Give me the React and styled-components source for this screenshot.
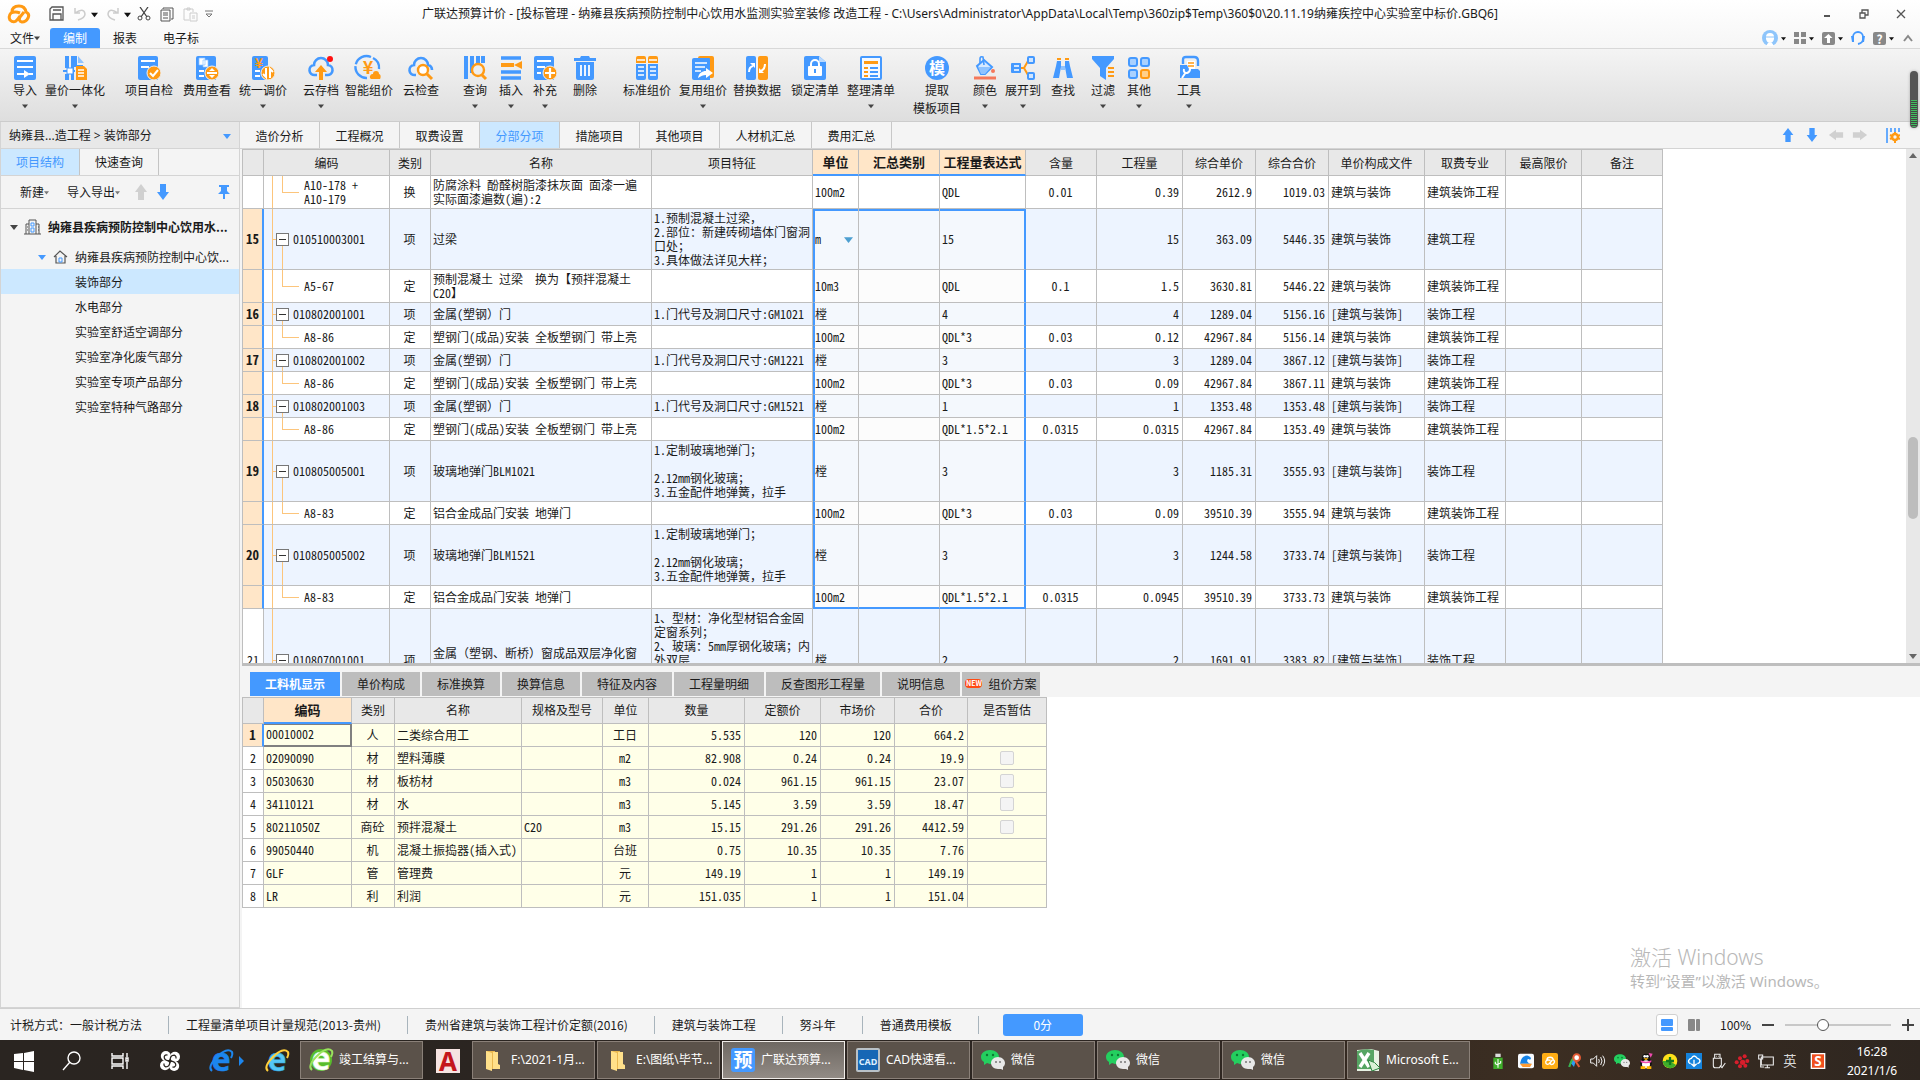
import React from "react";
import styled, { createGlobalStyle } from "styled-components";

const BLUE = "#4499ff";
const ORANGE = "#ff9a14";

const toolGroups = [
  [
    { label: "导入", icon: "import", width: 36, menu: true },
    { label: "量价一体化", icon: "merge", width: 64, menu: true },
  ],
  [
    { label: "项目自检", icon: "check", width: 60 },
    { label: "费用查看", icon: "fee", width: 56 },
    { label: "统一调价", icon: "adjust", width: 56, menu: true },
  ],
  [
    { label: "云存档", icon: "cloudUp", width: 36, menu: true },
    { label: "智能组价", icon: "smart", width: 60 },
    { label: "云检查", icon: "cloudFind", width: 44 },
  ],
  [
    { label: "查询", icon: "query", width: 40, menu: true },
    { label: "插入", icon: "insert", width: 32, menu: true },
    { label: "补充", icon: "append", width: 36, menu: true },
    { label: "删除", icon: "trash", width: 44 },
  ],
  [
    { label: "标准组价", icon: "standard", width: 56 },
    { label: "复用组价", icon: "reuse", width: 56, menu: true },
    { label: "替换数据", icon: "replace", width: 52 },
    { label: "锁定清单", icon: "lock", width: 64 },
    { label: "整理清单", icon: "tidy", width: 48, menu: true },
  ],
  [
    { label: "提取", second: "模板项目", icon: "template", width: 60 },
    { label: "颜色", icon: "color", width: 36, menu: true },
    { label: "展开到", icon: "expand", width: 40, menu: true },
    { label: "查找", icon: "find", width: 40 },
    { label: "过滤", icon: "filter", width: 40, menu: true },
    { label: "其他", icon: "other", width: 32, menu: true },
  ],
  [{ label: "工具", icon: "tools", width: 44, menu: true }],
];

const viewTabs = [
  "造价分析",
  "工程概况",
  "取费设置",
  "分部分项",
  "措施项目",
  "其他项目",
  "人材机汇总",
  "费用汇总",
];

const treeLeaves = [
  "装饰部分",
  "水电部分",
  "实验室舒适空调部分",
  "实验室净化废气部分",
  "实验室专项产品部分",
  "实验室特种气路部分",
];

const billColumns = [
  { key: "no", title: "", width: 21, align: "center" },
  { key: "code", title: "编码", width: 126, align: "left" },
  { key: "kind", title: "类别", width: 41, align: "center" },
  { key: "name", title: "名称", width: 221, align: "left" },
  { key: "feature", title: "项目特征", width: 161, align: "left" },
  { key: "unit", title: "单位", width: 46, align: "left", picked: true },
  { key: "sum", title: "汇总类别", width: 81, align: "left", picked: true },
  { key: "expr", title: "工程量表达式", width: 86, align: "left", picked: true },
  { key: "content", title: "含量", width: 71, align: "center" },
  { key: "qty", title: "工程量", width: 86, align: "right" },
  { key: "price", title: "综合单价", width: 73, align: "right" },
  { key: "total", title: "综合合价", width: 73, align: "right" },
  { key: "file", title: "单价构成文件", width: 96, align: "left" },
  { key: "major", title: "取费专业", width: 81, align: "left" },
  { key: "limit", title: "最高限价", width: 76, align: "left" },
  { key: "note", title: "备注", width: 81, align: "left" },
];

const doorName = "塑钢门(成品)安装 全板塑钢门 带上亮";
const glassFeature = "1.定制玻璃地弹门；\n\n2.12mm钢化玻璃；\n3.五金配件地弹簧，拉手";

const billRows = [
  { code: "A10-178 +\nA10-179", kind: "换", name: "防腐涂料 酚醛树脂漆抹灰面 面漆一遍\n实际面漆遍数(遍):2", unit: "100m2", expr: "QDL", content: "0.01", qty: "0.39", price: "2612.9", total: "1019.03", file: "建筑与装饰", major: "建筑装饰工程", height: 33 },
  { item: true, sel: true, no: "15", code: "010510003001", kind: "项", name: "过梁", feature: "1.预制混凝土过梁，\n2.部位：新建砖砌墙体门窗洞\n口处；\n3.具体做法详见大样；", unit: "m", dropdown: true, expr: "15", qty: "15", price: "363.09", total: "5446.35", file: "建筑与装饰", major: "建筑工程", height: 61 },
  { sel: true, code: "A5-67", kind: "定", name: "预制混凝土 过梁  换为【预拌混凝土\nC20】", unit: "10m3", expr: "QDL", content: "0.1", qty: "1.5", price: "3630.81", total: "5446.22", file: "建筑与装饰", major: "建筑装饰工程", height: 33 },
  { item: true, sel: true, no: "16", code: "010802001001", kind: "项", name: "金属(塑钢）门", feature: "1.门代号及洞口尺寸:GM1021", unit: "樘", expr: "4", qty: "4", price: "1289.04", total: "5156.16", file: "[建筑与装饰]", major: "装饰工程", height: 23 },
  { sel: true, code: "A8-86", kind: "定", name: doorName, unit: "100m2", expr: "QDL*3", content: "0.03", qty: "0.12", price: "42967.84", total: "5156.14", file: "建筑与装饰", major: "建筑装饰工程", height: 23 },
  { item: true, sel: true, no: "17", code: "010802001002", kind: "项", name: "金属(塑钢）门", feature: "1.门代号及洞口尺寸:GM1221", unit: "樘", expr: "3", qty: "3", price: "1289.04", total: "3867.12", file: "[建筑与装饰]", major: "装饰工程", height: 23 },
  { sel: true, code: "A8-86", kind: "定", name: doorName, unit: "100m2", expr: "QDL*3", content: "0.03", qty: "0.09", price: "42967.84", total: "3867.11", file: "建筑与装饰", major: "建筑装饰工程", height: 23 },
  { item: true, sel: true, no: "18", code: "010802001003", kind: "项", name: "金属(塑钢）门", feature: "1.门代号及洞口尺寸:GM1521", unit: "樘", expr: "1", qty: "1", price: "1353.48", total: "1353.48", file: "[建筑与装饰]", major: "装饰工程", height: 23 },
  { sel: true, code: "A8-86", kind: "定", name: doorName, unit: "100m2", expr: "QDL*1.5*2.1", content: "0.0315", qty: "0.0315", price: "42967.84", total: "1353.49", file: "建筑与装饰", major: "建筑装饰工程", height: 23 },
  { item: true, sel: true, no: "19", code: "010805005001", kind: "项", name: "玻璃地弹门BLM1021", feature: glassFeature, unit: "樘", expr: "3", qty: "3", price: "1185.31", total: "3555.93", file: "[建筑与装饰]", major: "装饰工程", height: 61 },
  { sel: true, code: "A8-83", kind: "定", name: "铝合金成品门安装 地弹门", unit: "100m2", expr: "QDL*3", content: "0.03", qty: "0.09", price: "39510.39", total: "3555.94", file: "建筑与装饰", major: "建筑装饰工程", height: 23 },
  { item: true, sel: true, no: "20", code: "010805005002", kind: "项", name: "玻璃地弹门BLM1521", feature: glassFeature, unit: "樘", expr: "3", qty: "3", price: "1244.58", total: "3733.74", file: "[建筑与装饰]", major: "装饰工程", height: 61 },
  { sel: true, code: "A8-83", kind: "定", name: "铝合金成品门安装 地弹门", unit: "100m2", expr: "QDL*1.5*2.1", content: "0.0315", qty: "0.0945", price: "39510.39", total: "3733.73", file: "建筑与装饰", major: "建筑装饰工程", height: 23 },
  { item: true, no: "21", code: "010807001001", kind: "项", name: "金属（塑钢、断桥）窗成品双层净化窗\n ", feature: "1、型材：净化型材铝合金固\n定窗系列；\n2、玻璃：5mm厚钢化玻璃；内\n外双层\n\n\n ", unit: "樘", expr: "2", qty: "2", price: "1691.91", total: "3383.82", file: "[建筑与装饰]", major: "装饰工程", height: 103 },
];

const detailTabs = [
  { label: "工料机显示", width: 90 },
  { label: "单价构成", width: 78 },
  { label: "标准换算", width: 78 },
  { label: "换算信息", width: 78 },
  { label: "特征及内容", width: 90 },
  { label: "工程量明细", width: 90 },
  { label: "反查图形工程量", width: 114 },
  { label: "说明信息", width: 78 },
  { label: "组价方案", width: 78, fresh: true },
];

const detailColumns = [
  { title: "", width: 21 },
  { title: "编码", width: 88, align: "left", picked: true },
  { title: "类别", width: 43, align: "center" },
  { title: "名称", width: 127, align: "left" },
  { title: "规格及型号", width: 81, align: "left" },
  { title: "单位", width: 46, align: "center" },
  { title: "数量", width: 96, align: "right" },
  { title: "定额价", width: 76, align: "right" },
  { title: "市场价", width: 74, align: "right" },
  { title: "合价", width: 73, align: "right" },
  { title: "是否暂估", width: 79, align: "center" },
];

const detailRows = [
  { cells: ["00010002", "人", "二类综合用工", "", "工日", "5.535", "120", "120", "664.2"] },
  { cells: ["02090090", "材", "塑料薄膜", "", "m2", "82.908", "0.24", "0.24", "19.9"], tick: true },
  { cells: ["05030630", "材", "板枋材", "", "m3", "0.024", "961.15", "961.15", "23.07"], tick: true },
  { cells: ["34110121", "材", "水", "", "m3", "5.145", "3.59", "3.59", "18.47"], tick: true },
  { cells: ["80211050Z", "商砼", "预拌混凝土", "C20", "m3", "15.15", "291.26", "291.26", "4412.59"], tick: true },
  { cells: ["99050440", "机", "混凝土振捣器(插入式)", "", "台班", "0.75", "10.35", "10.35", "7.76"] },
  { cells: ["GLF", "管", "管理费", "", "元", "149.19", "1", "1", "149.19"] },
  { cells: ["LR", "利", "利润", "", "元", "151.035", "1", "1", "151.04"] },
];

const statusItems = [
  "计税方式：一般计税方法",
  "工程量清单项目计量规范(2013-贵州)",
  "贵州省建筑与装饰工程计价定额(2016)",
  "建筑与装饰工程",
  "努斗年",
  "普通费用模板",
];

const openWindows = [
  { label: "F:\\2021-1月...", icon: "folder" },
  { label: "E:\\图纸\\毕节...", icon: "folder" },
  { label: "广联达预算...", icon: "budget", active: true },
  { label: "CAD快速看...", icon: "cad" },
  { label: "微信", icon: "wechat" },
  { label: "微信", icon: "wechat" },
  { label: "微信", icon: "wechat" },
  { label: "Microsoft E...", icon: "excel" },
];

const trayIcons = [
  "usb", "bird", "cloud", "antenna", "volume", "wechat", "penguin",
  "plus", "sync", "eject", "paw", "network", "lang", "sogou",
];

const Doc = () => <path d="M3 0h16a2 2 0 0 1 2 2v22H3a2 2 0 0 1-2-2V2a2 2 0 0 1 2-2z" fill={BLUE} />;
const Badge = ({ children }) => (
  <>
    <circle cx="17" cy="17" r="7" fill={ORANGE} stroke="#efefef" />
    {children}
  </>
);

const toolArt = {
  import: (
    <>
      <rect x="1" width="22" height="24" rx="2" fill={BLUE} />
      <path d="M4 5h16M4 11h16M4 18h7M16 18h4" stroke="#fff" strokeWidth="2" />
      <path d="M11 14l6 4-6 4z" fill="#fff" />
    </>
  ),
  merge: (
    <>
      <path d="M2 0h4v12H2zM2 18h4v6H2zM8 0h6v9h6v2h-9v13H8v-6H7v-6h1z" fill={BLUE} />
      <path d="M15 0l6 7h-6z" fill="#8fc3ff" />
      <path d="M0 15h12" stroke={BLUE} strokeWidth="2" />
      <rect x="4" y="12" width="6" height="6" fill="#fff" stroke={BLUE} strokeWidth="1" />
      <path d="M13 10h8l3 3v11H13z" fill={ORANGE} />
      <path d="M15 14h6M15 17h6M15 20h6" stroke="#fff" strokeWidth="1.4" />
    </>
  ),
  check: (
    <>
      <Doc />
      <path d="M4 5h14M4 11h8" stroke="#fff" strokeWidth="2" />
      <Badge><path d="M13 17l3 3 5-6" fill="none" stroke="#fff" strokeWidth="2" /></Badge>
    </>
  ),
  fee: (
    <>
      <Doc />
      <path d="M4 2h6v7H4zM8 4h5v7H8z" fill="#fff" stroke="#8fc3ff" strokeWidth=".7" />
      <path d="M4 15h5M4 20h5" stroke="#fff" strokeWidth="2" />
      <Badge><path d="M12 17h10" stroke="#fff" strokeWidth="2" /><path d="M14 15l3-3 3 3zM14 19l3 3 3-3z" fill="#fff" /></Badge>
    </>
  ),
  adjust: (
    <>
      <rect x="1" width="16" height="24" rx="2" fill={BLUE} />
      <text x="8" y="12" textAnchor="middle" fontSize="14" fontWeight="700" fill={ORANGE}>¥</text>
      <path d="M4 15h5M4 20h5" stroke="#fff" strokeWidth="2" />
      <Badge><path d="M15 12v9l-3-3M19 22v-9l3 3" fill="none" stroke="#fff" strokeWidth="2" /></Badge>
    </>
  ),
  cloudUp: (
    <>
      <path d="M8 19H6a5 5 0 0 1-1-10 7 7 0 0 1 14 0 5 5 0 0 1-1 10h-2" fill="none" stroke={BLUE} strokeWidth="2.6" />
      <path d="M12 9l6 7h-4v8h-4v-8H6z" fill={ORANGE} />
      <circle cx="21" cy="3" r="3" fill="#ff1010" />
    </>
  ),
  smart: (
    <>
      <path d="M14 1a11 11 0 1 0-4 21M16 2a11 11 0 0 1 6 11" fill="none" stroke={BLUE} strokeWidth="2.4" strokeDasharray="19 2" />
      <text x="11" y="18" textAnchor="middle" fontSize="18" fontWeight="700" fill={ORANGE}>¥</text>
      <path d="M13 22a3 3 0 0 1 3-4 3 3 0 0 1 6 0c2 0 2 4 1 5H14z" fill={ORANGE} />
    </>
  ),
  cloudFind: (
    <>
      <path d="M7 19H6A5 5 0 0 1 5 9a7 7 0 0 1 14 0q4 1 4 5" fill="none" stroke={BLUE} strokeWidth="2.6" />
      <circle cx="14" cy="14" r="5" fill="#fff" stroke={ORANGE} strokeWidth="2.4" />
      <path d="M18 18l5 5" stroke={ORANGE} strokeWidth="3" />
    </>
  ),
  query: (
    <>
      <path d="M3 0v23M9 0v17M15 0v7M20 0v7" stroke={BLUE} strokeWidth="4" />
      <circle cx="15" cy="14" r="6" fill="#eee" stroke={ORANGE} strokeWidth="2.4" />
      <path d="M19 19l4 4" stroke={ORANGE} strokeWidth="3" />
    </>
  ),
  insert: (
    <>
      <path d="M2 2h20M2 16h20M2 22h20" stroke={BLUE} strokeWidth="3.6" />
      <path d="M2 9h13" stroke={ORANGE} strokeWidth="4" />
      <path d="M23 5v8l-8-4z" fill={ORANGE} />
    </>
  ),
  append: (
    <>
      <Doc />
      <path d="M4 5h14M4 11h8M4 17h4" stroke="#fff" strokeWidth="2" />
      <Badge><path d="M12 17h10M17 12v10" stroke="#fff" strokeWidth="2.2" /></Badge>
    </>
  ),
  trash: (
    <>
      <path d="M1 2h6l1-2h8l1 2h6v3H1zM3 6h18v16a2 2 0 0 1-2 2H5a2 2 0 0 1-2-2z" fill={BLUE} />
      <path d="M8 9v11M12 9v11M16 9v11" stroke="#fff" strokeWidth="1.8" />
    </>
  ),
  standard: (
    <>
      <path d="M1 7V2a2 2 0 0 1 2-2h6a2 2 0 0 1 2 2v5zM13 7V2a2 2 0 0 1 2-2h6a2 2 0 0 1 2 2v5z" fill={ORANGE} />
      <path d="M1 8h10v14a2 2 0 0 1-2 2H3a2 2 0 0 1-2-2zM13 8h10v14a2 2 0 0 1-2 2h-6a2 2 0 0 1-2-2z" fill={BLUE} />
      <path d="M2 4h8M14 4h8M3 11h6M3 15h6M3 19h6M15 11h6M15 15h6M15 19h6" stroke="#fff" strokeWidth="1.5" />
    </>
  ),
  reuse: (
    <>
      <rect x="7" width="16" height="22" rx="2" fill={ORANGE} />
      <path d="M3 2h15a1 1 0 0 1 1 1v21H3a2 2 0 0 1-2-2V4a2 2 0 0 1 2-2z" fill={BLUE} />
      <path d="M4 7h12M4 11h10M4 15h6" stroke="#fff" strokeWidth="1.7" />
      <path d="M7 22c1-5 4-7 8-7v-3l7 5-7 5v-3c-3 0-5 1-8 3z" fill="#fff" />
    </>
  ),
  replace: (
    <>
      <rect x="1" width="10" height="24" rx="2" fill={BLUE} />
      <rect x="13" width="10" height="24" rx="2" fill={ORANGE} />
      <path d="M4 16q0-5 4-6M20 8q0 5-4 7" fill="none" stroke="#fff" strokeWidth="2" />
      <path d="M5 7h5v5zM14 12v5h5z" fill="#fff" />
    </>
  ),
  lock: (
    <>
      <path d="M3 0h13l7 6v16a2 2 0 0 1-2 2H3a2 2 0 0 1-2-2V2a2 2 0 0 1 2-2z" fill={BLUE} />
      <path d="M16 0l7 6h-7z" fill="#b8d9ff" />
      <rect x="5" y="10" width="14" height="10" rx="1" fill="#fff" />
      <path d="M8 10V8a4 4 0 0 1 8 0v2" fill="none" stroke="#fff" strokeWidth="2" />
      <path d="M12 13v4" stroke={BLUE} strokeWidth="2" />
    </>
  ),
  tidy: (
    <>
      <rect x="2" y="1" width="20" height="22" rx="1" fill="#f5f9ff" stroke={BLUE} strokeWidth="2" />
      <path d="M5 5h14v3H5z" fill={ORANGE} />
      <path d="M5 12h4M5 16h4M5 20h4" stroke={ORANGE} strokeWidth="1.8" />
      <path d="M11 12h8M11 16h8M11 20h8" stroke={BLUE} strokeWidth="1.8" />
    </>
  ),
  template: (
    <>
      <circle cx="12" cy="12" r="12" fill={BLUE} />
      <text x="12" y="18" textAnchor="middle" fontSize="16" fontWeight="700" fill="#fff">模</text>
    </>
  ),
  color: (
    <>
      <path d="M4 10l7-6 8 7-7 7H8z" fill="#d6e9ff" stroke={BLUE} strokeWidth="2" />
      <path d="M5 11h13l-6 7H8z" fill="#8fc3ff" />
      <path d="M7 7V3q0-3 3-2l1 8" fill="none" stroke={BLUE} strokeWidth="1.6" />
      <circle cx="20" cy="15" r="2" fill="#f5785a" />
      <path d="M1 22h22" stroke="#f5785a" strokeWidth="3" />
    </>
  ),
  expand: (
    <>
      <path d="M9 12h4M13 12l4-7M13 12l4 7" stroke={ORANGE} strokeWidth="2" />
      <rect y="7" width="10" height="10" rx="1" fill={BLUE} />
      <path d="M3 10h5M3 14h5" stroke="#fff" strokeWidth="1.6" />
      <rect x="17" y="1" width="6" height="6" rx="1" fill="#cfe5ff" stroke={BLUE} strokeWidth="2" />
      <rect x="17" y="17" width="6" height="6" rx="1" fill="#cfe5ff" stroke={BLUE} strokeWidth="2" />
    </>
  ),
  find: (
    <>
      <path d="M6 2h4v2H6zM14 2h4v2h-4z" fill={ORANGE} />
      <path d="M6 5h4v6l-2 11H2l3-12zM18 5h-4v6l2 11h6l-3-12z" fill={BLUE} />
      <path d="M10 10h4v4h-4z" fill="#8fc3ff" />
    </>
  ),
  filter: (
    <>
      <path d="M1 0h22v3l-8 9v12l-6-4v-8L1 3z" fill={BLUE} />
      <path d="M17 12h6M17 16h6M17 20h6" stroke={ORANGE} strokeWidth="2" />
    </>
  ),
  other: (
    <>
      {[[2, 2], [14, 2], [2, 14]].map(([x, y]) => (
        <rect key={`${x}-${y}`} x={x} y={y} width="8" height="8" rx="2" fill="#a9d1ff" stroke={BLUE} strokeWidth="2" />
      ))}
      <rect x="14" y="14" width="8" height="8" rx="2" fill="#ffd08a" stroke={ORANGE} strokeWidth="2" />
    </>
  ),
  tools: (
    <>
      <path d="M6 8V4q0-3 3-3h8q4 0 4 4v5" fill="none" stroke={BLUE} strokeWidth="2.4" />
      <path d="M10 5h8v8h-8z" fill="#fff" />
      <path d="M11 7h6M11 10h6" stroke={ORANGE} strokeWidth="1.6" />
      <path d="M3 9h7l2 4h9l2 2v7H3z" fill={BLUE} />
      <path d="M5 22l4-6M7 13q-1 4 3 4 3-1 3-4" fill="none" stroke="#fff" strokeWidth="2" />
    </>
  ),
};

const WeChatArt = () => (
  <>
    <path d="M9 2c5 0 9 3 9 7s-4 7-9 7l-3-1-3 2v-3C1 13 0 11 0 9c0-4 4-7 9-7z" fill="#24cf5f" />
    <circle cx="6" cy="7" r="1.2" fill="#0d7a34" />
    <circle cx="12" cy="7" r="1.2" fill="#0d7a34" />
    <path d="M17 9c4 0 7 3 7 6 0 2-1 3-2 4v3l-2-1h-3c-4 0-7-3-7-6s3-6 7-6z" fill="#e8e8e8" />
    <circle cx="15" cy="14" r="1" fill="#777" />
    <circle cx="19" cy="14" r="1" fill="#777" />
  </>
);

const CloudMark = ({ color }) => (
  <path
    d="M5 8Q5 2 12 2q6 0 7 6 4 2 2 6-2 4-6 4-4-1-2-5l4-5M13 9Q8 7 4 9q-3 3-1 7 3 3 6 1 2-2 4-5"
    fill="none"
    stroke={color}
    strokeWidth="3"
  />
);

const BrowserArt = ({ light, dark, ring }) => (
  <>
    <text x="12" y="22" textAnchor="middle" fontSize="32" fontWeight="700" fill={light} stroke={dark} strokeWidth=".6">e</text>
    <path d="M3 22Q-2 18 8 8T23 3q1 2-1 6" fill="none" stroke={ring} strokeWidth="2" />
  </>
);

const taskArt = {
  windows: <path d="M2 5l9-1v8H2zM12 4l10-2v10H12zM2 13h9v8l-9-2zM12 13h10v10l-10-2z" fill="#fff" />,
  search: <><circle cx="14" cy="9" r="6" fill="none" stroke="#fff" strokeWidth="1.4" /><path d="M10 13l-7 8" stroke="#fff" strokeWidth="1.4" /></>,
  taskview: <path d="M4 4v3h11V4M4 20v-3h11v3M4 9h11v6H4zM19 4v4M19 13v7M18 9h2v3h-2z" fill="none" stroke="#fff" strokeWidth="1.4" />,
  pinwheel: (
    <>
      <g fill="#fff">
        <circle cx="7" cy="6" r="6" />
        <circle cx="18" cy="7" r="6" />
        <circle cx="6" cy="17" r="6" />
        <circle cx="17" cy="18" r="6" />
      </g>
      {[0, 90, 180, 270].map((turn) => (
        <path key={turn} d="M12 12Q5 12 5 7q1-3 4-2" fill="none" stroke="#2a2521" strokeWidth="1.5" transform={`rotate(${turn} 12 12)`} />
      ))}
    </>
  ),
  edge: <BrowserArt light="#1c86ee" dark="#1c86ee" ring="#1c86ee" />,
  ie: <BrowserArt light="#55c6f5" dark="#2aa4dd" ring="#ffcf3a" />,
  green: <><circle cx="12" cy="12" r="11" fill="#58bd2c" /><BrowserArt light="#fff" dark="#d8f5c8" ring="#9be35e" /></>,
  autocad: <><rect width="24" height="24" fill="#f6e4e2" /><text x="12" y="22" textAnchor="middle" fontSize="26" fontWeight="700" fill="#c4161c">A</text></>,
  folder: <><path d="M5 3h9v18H5z" fill="#e9b850" /><path d="M5 3l6 2v18l-6-2zM12 4h5v12l2 1v4h-7z" fill="#ffe08a" /></>,
  budget: <><rect width="24" height="24" rx="3" fill={BLUE} /><text x="12" y="19" textAnchor="middle" fontSize="19" fontWeight="700" fill="#fff">预</text></>,
  cad: <><rect width="24" height="24" rx="2" fill="#b9c1c7" /><rect x="2" y="2" width="20" height="20" fill="#1767b5" /><text x="12" y="17" textAnchor="middle" fontSize="9" fontWeight="700" fill="#dff0ff">CAD</text></>,
  wechat: <WeChatArt />,
  excel: (
    <>
      <path d="M1 2l14-1 8 2v20H1z" fill="#e8f3e4" />
      <path d="M1 3q8-3 17-1v19H1z" fill="#56a563" />
      <path d="M4 5l9 14M13 5L4 19" stroke="#fff" strokeWidth="3.4" />
      <path d="M12 12q7 1 12 8l-8 3z" fill="#d9f0d5" stroke="#2c8441" />
    </>
  ),
  usb: <><path d="M8 1h8v5H8z" fill="#ddd" /><path d="M5 7h14v17H5z" fill="#3fae2a" /><path d="M12 9v13M8 13v3l4 2M16 12v3l-4 2" fill="none" stroke="#fff" strokeWidth="1.6" /></>,
  bird: <><rect y="1" width="24" height="22" rx="3" fill="#f8fbff" /><path d="M3 16q2-13 12-12 7 3 3 6-5-3-4 3 2 3 6 3z" fill="#1583e8" /><path d="M3 16h18l-3 5H7z" fill="#ff9b32" /></>,
  cloud: <><rect width="24" height="24" rx="3" fill="#ffad14" /><g transform="translate(4 5) scale(.68)"><CloudMark color="#fff" /></g></>,
  antenna: <><path d="M3 21L13 4l4 1-5 16-4-5z" fill="#2d9bf0" /><path d="M5 21q3-12 9-16" stroke="#3bb54a" strokeWidth="3" fill="none" /><circle cx="16" cy="7" r="5" fill="#fff" stroke="#e45b34" strokeWidth="3" /><path d="M14 12l6 9" stroke="#e45b34" strokeWidth="3" /></>,
  volume: <path d="M1 9h4l5-5v16l-5-5H1zM13 9q2 3 0 6M16 6q4 6 0 12M19 4q6 8 0 16" fill="none" stroke="#eee" strokeWidth="1.5" />,
  penguin: (
    <>
      <ellipse cx="12" cy="15" rx="9" ry="8" fill="#111" />
      <circle cx="12" cy="7" r="6" fill="#111" />
      <ellipse cx="12" cy="17" rx="6" ry="6" fill="#fff" />
      <path d="M8 8h8l-4 3zM4 20h7v4H4zM13 20h7v4h-7z" fill="#ffb400" />
      <circle cx="10" cy="5" r="2" fill="#fff" />
      <circle cx="14" cy="5" r="2" fill="#fff" />
      <path d="M4 11q8 4 16 0v3q-8 3-16 0zM16 0l6 1-3 6z" fill="#f04bb0" />
    </>
  ),
  plus: <><circle cx="12" cy="12" r="11" fill="#ffe11a" /><path d="M1 12a11 11 0 0 0 20 6L12 12z" fill="#3fae2a" /><path d="M12 6v12M6 12h12" stroke="#147a1e" strokeWidth="3.4" /></>,
  sync: <><rect width="24" height="24" fill="#1583dc" /><path d="M7 16q-4-1-3-5 2-3 4-3 4-7 9 0 4 1 4 4 0 3-4 4M12 10v10M8 16l4 4 4-4" fill="none" stroke="#fff" strokeWidth="2" /></>,
  eject: <path d="M7 2h8v6H7zM5 8h12v10l-3 4H8q-3 0-3-3zM9 5h1M12 5h1M15 19l3 3 5-7" fill="none" stroke="#eee" strokeWidth="1.6" />,
  paw: <g fill="#d81e2c"><circle cx="4" cy="14" r="3" /><circle cx="9" cy="8" r="3" /><circle cx="16" cy="5" r="3" /><circle cx="20" cy="12" r="3" /><circle cx="13" cy="14" r="4" /><circle cx="9" cy="20" r="3" /><circle cx="17" cy="19" r="3" /></g>,
  network: <path d="M5 6h18v12H5zM1 3h6v6H1zM4 9v12h5M14 18v4M10 22h8" fill="none" stroke="#eee" strokeWidth="1.6" />,
  lang: <text x="12" y="19" textAnchor="middle" fontSize="20" fill="#d8d8d8">英</text>,
  sogou: <><rect x="1" width="22" height="24" fill="#fff" /><rect x="3" y="2" width="18" height="20" fill="#f0501e" /><text x="12" y="20" textAnchor="middle" fontSize="20" fontWeight="700" fill="#fff">S</text></>,
};

const Art = ({ set, name, size = 24 }) => (
  <svg width={size} height={size} viewBox="0 0 24 24" overflow="visible" aria-hidden="true">
    {set[name]}
  </svg>
);

const Caret = ({ color = "#444", size = 7 }) => (
  <svg width={size} height={size} viewBox="0 0 8 8" aria-hidden="true">
    <path d="M0 2h8L4 7z" fill={color} />
  </svg>
);

const ArrowArt = ({ color, turn = 0, size = 18 }) => (
  <svg width={size} height={size} viewBox="0 0 18 18" aria-hidden="true">
    <path d="M9 1l6 8h-3v8H6V9H3z" fill={color} transform={`rotate(${turn} 9 9)`} />
  </svg>
);

function TitleBar() {
  return (
    <TopRow>
      <QuickBar>
        <svg width="24" height="20" viewBox="0 0 24 20"><CloudMark color={ORANGE} /></svg>
        <QuickButton aria-label="保存" $left={18}>
          <svg width="16" height="16" viewBox="0 0 16 16"><path d="M1 14V3l2-2h11v13zM4 14V8h8v6M4 4h8" fill="none" stroke="#555" strokeWidth="1.3" /></svg>
        </QuickButton>
        <QuickButton aria-label="撤销" $left={8}>
          <svg width="14" height="16" viewBox="0 0 14 16"><path d="M2 2v5h5M2 7q9-6 10 1 0 4-7 6" fill="none" stroke="#ccc" strokeWidth="1.5" /></svg>
          <Caret color="#111" />
        </QuickButton>
        <QuickButton aria-label="恢复" $left={8}>
          <svg width="14" height="16" viewBox="0 0 14 16"><path d="M12 2v5H7M12 7Q3 1 2 8q0 4 7 6" fill="none" stroke="#ccc" strokeWidth="1.5" /></svg>
          <Caret color="#111" />
        </QuickButton>
        <QuickButton aria-label="剪切" $left={6}>
          <svg width="14" height="14" viewBox="0 0 14 14"><path d="M3 0l7 10M11 0L4 10" stroke="#444" strokeWidth="1.3" /><circle cx="3" cy="11" r="2" fill="none" stroke="#444" /><circle cx="11" cy="11" r="2" fill="none" stroke="#444" /></svg>
        </QuickButton>
        <QuickButton aria-label="复制" $left={9}>
          <svg width="14" height="15" viewBox="0 0 14 15"><path d="M3 2V1h10v11h-2M1 3h9v11H1zM3 6h5M3 8h5M3 11h5" fill="none" stroke="#555" /></svg>
        </QuickButton>
        <QuickButton aria-label="粘贴" $left={9}>
          <svg width="15" height="15" viewBox="0 0 15 15"><path d="M6 13H1V2h9v3M4 1h3v2H4zM7 6h7v8H7zM9 9h3M9 11h3" fill="none" stroke="#ccc" /></svg>
        </QuickButton>
        <QuickButton aria-label="自定义" $left={7}>
          <svg width="8" height="9" viewBox="0 0 8 9"><path d="M0 1h8" stroke="#777" /><path d="M1 4h6L4 7z" fill="none" stroke="#777" /></svg>
        </QuickButton>
      </QuickBar>
      <WindowTitle>
        广联达预算计价 - [投标管理 - 纳雍县疾病预防控制中心饮用水监测实验室装修 改造工程 - C:\Users\Administrator\AppData\Local\Temp\360zip$Temp\360$0\20.11.19纳雍疾控中心实验室中标价.GBQ6]
      </WindowTitle>
      <WindowButtons>
        <button aria-label="最小化"><svg width="10" height="10" viewBox="0 0 10 10"><path d="M2 7h6" stroke="#555" strokeWidth="2" /></svg></button>
        <button aria-label="还原"><svg width="10" height="10" viewBox="0 0 10 10"><path d="M1 4h5v5H1zM3 4V1h6v5H6" fill="none" stroke="#555" strokeWidth="1.3" /></svg></button>
        <button aria-label="关闭"><svg width="10" height="10" viewBox="0 0 10 10"><path d="M1 1l8 8M9 1L1 9" stroke="#555" strokeWidth="1.3" /></svg></button>
      </WindowButtons>
    </TopRow>
  );
}

function MenuBar() {
  return (
    <MenuRow>
      <MenuTab>文件<Caret size={6} /></MenuTab>
      <MenuTab $active>编制</MenuTab>
      <MenuTab>报表</MenuTab>
      <MenuTab $wide>电子标</MenuTab>
      <AccountBar>
        <button aria-label="账户">
          <svg width="16" height="16" viewBox="0 0 16 16"><circle cx="8" cy="8" r="8" fill="#8ec5fb" /><path d="M4 7a4 4 0 0 1 8 0v2q-1 4-4 4T4 9zM4 16l2-3h4l2 3z" fill="#fff" /><path d="M3 7h10" stroke="#8ec5fb" /></svg>
          <Caret color="#111" size={5} />
        </button>
        <button aria-label="布局">
          <svg width="12" height="12" viewBox="0 0 12 12"><path d="M0 0h5v5H0zM7 0h5v5H7zM0 7h5v5H0zM7 7h5v5H7z" fill="#888" /></svg>
          <Caret color="#111" size={5} />
        </button>
        <button aria-label="升级">
          <svg width="13" height="13" viewBox="0 0 13 13"><rect width="13" height="13" rx="2" fill="#888" /><path d="M6.500 2l4 4H8v5H5V6H2z" fill="#fff" /></svg>
          <Caret color="#111" size={5} />
        </button>
        <button aria-label="客服">
          <svg width="14" height="14" viewBox="0 0 14 14"><path d="M2 8V6a5 5 0 0 1 10 0v2q0 4-5 5" fill="none" stroke={BLUE} strokeWidth="1.8" /><path d="M0 5h3v6H1zM11 5h3l-1 6h-2z" fill={BLUE} /></svg>
        </button>
        <button aria-label="帮助">
          <HelpMark>?</HelpMark>
          <Caret color="#111" size={5} />
        </button>
        <button aria-label="收起功能区">
          <svg width="12" height="8" viewBox="0 0 12 8"><path d="M2 7l4-5 4 5" fill="none" stroke="#888" strokeWidth="2" /></svg>
        </button>
      </AccountBar>
    </MenuRow>
  );
}

function Ribbon() {
  return (
    <RibbonBar>
      {toolGroups.map((group) => (
        <ToolGroup key={group[0].label}>
          {group.map((tool) => (
            <ToolButton key={tool.label} $width={tool.width}>
              <Art set={toolArt} name={tool.icon} />
              <span>{tool.label}</span>
              {tool.second && <span>{tool.second}</span>}
              {tool.menu && <Caret size={6} />}
            </ToolButton>
          ))}
        </ToolGroup>
      ))}
    </RibbonBar>
  );
}

function ProjectPanel() {
  return (
    <SidePanel>
      <Breadcrumb>
        纳雍县...造工程 &gt; 装饰部分
        <Caret color={BLUE} size={8} />
      </Breadcrumb>
      <SideTabs>
        <SideTab $active>项目结构</SideTab>
        <SideTab>快速查询</SideTab>
      </SideTabs>
      <SideTools>
        <SideButton>新建<Caret color="#777" size={5} /></SideButton>
        <SideButton $left={18}>导入导出<Caret color="#777" size={5} /></SideButton>
        <SideButton $left={12} aria-label="上移"><ArrowArt color="#d0d0d0" /></SideButton>
        <SideButton $left={4} aria-label="下移"><ArrowArt color={BLUE} turn={180} /></SideButton>
        <PinButton aria-label="固定">
          <svg width="14" height="16" viewBox="0 0 14 16"><path d="M2 1h10v2h-2v4l3 3H1l3-3V3H2zM6 10h2v5H6z" fill={BLUE} /></svg>
        </PinButton>
      </SideTools>
      <RootNode>
        <Caret size={8} />
        <svg width="18" height="16" viewBox="0 0 18 16"><path d="M2 15V5h3M5 15V1h7v14M12 5h3v10M0 15h17M3 8h1M3 11h1M14 8h1M14 11h1" fill="none" stroke="#555" /><path d="M7 4h3v3H7zM7 9h3v4H7z" fill="none" stroke={BLUE} /></svg>
        <span>纳雍县疾病预防控制中心饮用水...</span>
      </RootNode>
      <BranchNode>
        <Caret color={BLUE} size={8} />
        <svg width="15" height="14" viewBox="0 0 15 14"><path d="M1 7l6-6 7 6M3 6v7h9V6" fill="none" stroke="#555" strokeWidth="1.2" /><path d="M6 8h3v4H6z" fill="none" stroke={BLUE} /></svg>
        <span>纳雍县疾病预防控制中心饮...</span>
      </BranchNode>
      {treeLeaves.map((leaf, i) => (
        <LeafNode key={leaf} $active={i === 0}>{leaf}</LeafNode>
      ))}
    </SidePanel>
  );
}

function BillCell({ row, column, lastSel, firstSel }) {
  const value = row[column.key];
  if (column.key === "no") {
    return <NumberCell $sel={row.sel} $bold={row.sel}>{value}</NumberCell>;
  }
  if (column.key === "code") {
    return (
      <CodeCell $item={row.item}>
        {row.item ? (
          <CodeLine>
            <FoldButton aria-label={`折叠 ${value}`} />
            {value}
          </CodeLine>
        ) : (
          <ChildCode>{value}</ChildCode>
        )}
      </CodeCell>
    );
  }
  if (column.picked && row.sel) {
    return (
      <PickedCell
        $item={row.item}
        $top={firstSel}
        $bottom={lastSel}
        $left={column.key === "unit"}
        $right={column.key === "expr"}
      >
        {row.dropdown && column.key === "unit" ? (
          <UnitPicker>
            <select aria-label="单位" defaultValue={value}>
              <option>{value}</option>
            </select>
            <Caret color="#4d9fd0" size={9} />
          </UnitPicker>
        ) : (
          value
        )}
      </PickedCell>
    );
  }
  return <Cell $align={column.align} $item={row.item}>{value}</Cell>;
}

function BillTable() {
  const selected = billRows.filter((row) => row.sel);
  return (
    <BillArea>
      <BillScroll>
        <Grid $width={1421}>
          <colgroup>
            {billColumns.map((c, i) => <col key={c.key} width={i === 0 ? c.width + 1 : c.width} />)}
          </colgroup>
          <thead>
            <tr>
              {billColumns.map((c) => <HeadCell key={c.key} $picked={c.picked}>{c.title}</HeadCell>)}
            </tr>
          </thead>
          <tbody>
            {billRows.map((row, i) => (
              <GridRow key={i} $height={row.height}>
                {billColumns.map((c) => (
                  <BillCell
                    key={c.key}
                    row={row}
                    column={c}
                    firstSel={row === selected[0]}
                    lastSel={row === selected[selected.length - 1]}
                  />
                ))}
              </GridRow>
            ))}
          </tbody>
        </Grid>
      </BillScroll>
      <ScrollTrack aria-hidden="true">
        <svg width="8" height="6" viewBox="0 0 8 6"><path d="M0 5h8L4 0z" fill="#666" /></svg>
        <ScrollThumb />
        <svg width="8" height="6" viewBox="0 0 8 6"><path d="M0 1h8L4 6z" fill="#666" /></svg>
      </ScrollTrack>
    </BillArea>
  );
}

function DetailPane() {
  return (
    <DetailArea>
      <DetailTabs>
        {detailTabs.map((tab, i) => (
          <DetailTab key={tab.label} $width={tab.width} $active={i === 0}>
            {tab.fresh && <NewBadge>NEW</NewBadge>}
            {tab.label}
          </DetailTab>
        ))}
      </DetailTabs>
      <DetailBody>
        <Grid $width={805}>
          <colgroup>
            {detailColumns.map((c, i) => <col key={c.title} width={i === 0 ? c.width + 1 : c.width} />)}
          </colgroup>
          <thead>
            <tr>
              {detailColumns.map((c) => <HeadCell key={c.title} $picked={c.picked}>{c.title}</HeadCell>)}
            </tr>
          </thead>
          <tbody>
            {detailRows.map((row, r) => (
              <GridRow key={row.cells[0]} $height={23}>
                <NumberCell $sel={r === 0} $bold={r === 0}>{r + 1}</NumberCell>
                {row.cells.map((value, i) => (
                  <DetailCell key={i} $align={detailColumns[i + 1].align} $focus={r === 0 && i === 0}>
                    {value}
                  </DetailCell>
                ))}
                <DetailCell $align="center">
                  {row.tick && <Tick type="checkbox" aria-label={`${row.cells[2]} 是否暂估`} />}
                </DetailCell>
              </GridRow>
            ))}
          </tbody>
        </Grid>
        <Watermark>
          <strong>激活 Windows</strong>
          <span>转到“设置”以激活 Windows。</span>
        </Watermark>
      </DetailBody>
    </DetailArea>
  );
}

function StatusBar() {
  return (
    <Status>
      {statusItems.map((text) => <StatusItem key={text}>{text}</StatusItem>)}
      <ScoreButton>0分</ScoreButton>
      <ZoomBar>
        <LayoutButton aria-label="上下布局" $active>
          <svg width="12" height="12" viewBox="0 0 12 12"><rect width="12" height="7" rx="1" fill={BLUE} /><rect y="8" width="12" height="4" rx="1" fill={BLUE} /></svg>
        </LayoutButton>
        <LayoutButton aria-label="左右布局">
          <svg width="12" height="12" viewBox="0 0 12 12"><rect width="7" height="12" rx="1" fill="#888" /><rect x="8" width="4" height="12" rx="1" fill="#888" /></svg>
        </LayoutButton>
        <ZoomLabel htmlFor="zoom">100%</ZoomLabel>
        <StepButton aria-label="缩小"><svg width="12" height="12" viewBox="0 0 12 12"><path d="M0 6h12" stroke="#444" strokeWidth="2" /></svg></StepButton>
        <ZoomSlider id="zoom" type="range" min="0" max="100" defaultValue="34" />
        <StepButton aria-label="放大"><svg width="12" height="12" viewBox="0 0 12 12"><path d="M0 6h12M6 0v12" stroke="#444" strokeWidth="2" /></svg></StepButton>
      </ZoomBar>
    </Status>
  );
}

function TaskBar() {
  return (
    <Task>
      <Launch $width={48} aria-label="开始"><Art set={taskArt} name="windows" /></Launch>
      <Launch $width={48} aria-label="搜索"><Art set={taskArt} name="search" /></Launch>
      <Launch $width={48} aria-label="任务视图"><Art set={taskArt} name="taskview" /></Launch>
      <Launch $width={52} aria-label="浏览器"><Art set={taskArt} name="pinwheel" size={20} /></Launch>
      <Launch $width={60} aria-label="Edge">
        <Art set={taskArt} name="edge" />
        <svg width="5" height="10" viewBox="0 0 5 10"><path d="M0 0l5 5-5 5z" fill="#1c86ee" /></svg>
      </Launch>
      <Launch $width={42} aria-label="Internet Explorer"><Art set={taskArt} name="ie" /></Launch>
      <WindowButton $first><Art set={taskArt} name="green" /><span>竣工结算与...</span></WindowButton>
      <Launch $width={46} aria-label="AutoCAD"><Art set={taskArt} name="autocad" /></Launch>
      {openWindows.map((win, i) => (
        <WindowButton key={i} $active={win.active}>
          <Art set={taskArt} name={win.icon} />
          <span>{win.label}</span>
        </WindowButton>
      ))}
      <Tray>
        {trayIcons.map((name) => (
          <TrayButton key={name} aria-label={name} $wide={name === "usb" || name === "sogou"}>
            <Art set={taskArt} name={name} size={16} />
          </TrayButton>
        ))}
        <Clock>
          <span>16:28</span>
          <span>2021/1/6</span>
        </Clock>
      </Tray>
    </Task>
  );
}

export default function App() {
  return (
    <Window>
      <GlobalStyle />
      <Header>
        <TitleBar />
        <MenuBar />
      </Header>
      <Ribbon />
      <LoadMeter aria-hidden="true"><i /></LoadMeter>
      <Workspace>
        <ProjectPanel />
        <MainPanel>
          <ViewTabs>
            {viewTabs.map((tab) => (
              <ViewTab key={tab} $active={tab === "分部分项"} $wide={tab.length > 4}>{tab}</ViewTab>
            ))}
            <ViewTools>
              <button aria-label="上移"><ArrowArt color={BLUE} size={16} /></button>
              <button aria-label="下移"><ArrowArt color={BLUE} turn={180} size={16} /></button>
              <button aria-label="后退"><ArrowArt color="#d0d0d0" turn={270} size={16} /></button>
              <button aria-label="前进"><ArrowArt color="#d0d0d0" turn={90} size={16} /></button>
              <SettingsButton aria-label="列设置">
                <svg width="14" height="15" viewBox="0 0 14 15"><path d="M1 0v15M5 0v4M9 0v4M13 0v4" stroke={BLUE} strokeWidth="1.6" /><circle cx="9" cy="9" r="3" fill="none" stroke={ORANGE} strokeWidth="2.6" /><path d="M9 4v2M9 12v3M4 7l2 1M12 10l2 1M14 7l-2 1M6 10l-2 1" stroke={ORANGE} strokeWidth="2" /></svg>
              </SettingsButton>
            </ViewTools>
          </ViewTabs>
          <BillTable />
          <DetailPane />
        </MainPanel>
      </Workspace>
      <StatusBar />
      <TaskBar />
    </Window>
  );
}

const latinFont = `"Noto Sans", "Noto Sans CJK SC", sans-serif`;

const GlobalStyle = createGlobalStyle`
  * {
    box-sizing: border-box;
  }
  body {
    margin: 0;
    color: #1a1a1a;
    font: 12px/16px "Noto Sans CJK SC", sans-serif;
  }
  button, select {
    margin: 0;
    padding: 0;
    border: 0;
    background: none;
    color: inherit;
    font: inherit;
    white-space: nowrap;
  }
  svg {
    display: block;
    flex: none;
  }
`;
const Window = styled.div`
  display: flex;
  flex-direction: column;
  height: 100vh;
  overflow: hidden;
  background: #f4f4f4;
`;
const Header = styled.header`
  background: linear-gradient(#ffffff, #f6f6f6);
  border-bottom: 1px solid #d8d8d8;
`;
const TopRow = styled.div`
  display: grid;
  grid-template-columns: 1fr auto 1fr;
  align-items: center;
  height: 28px;
`;
const QuickBar = styled.div`
  display: flex;
  align-items: center;
  padding-left: 7px;
`;
const QuickButton = styled.button`
  display: flex;
  align-items: center;
  gap: 4px;
  margin-left: ${(props) => props.$left}px;
`;
const WindowTitle = styled.div`
  font-family: ${latinFont};
  white-space: nowrap;
`;
const WindowButtons = styled.div`
  display: flex;
  justify-content: flex-end;
  gap: 27px;
  padding-right: 14px;
`;
const MenuRow = styled.nav`
  display: flex;
  height: 20px;
`;
const MenuTab = styled.button`
  display: flex;
  align-items: center;
  justify-content: center;
  width: ${(props) => (props.$wide ? 62 : 50)}px;
  border-radius: 3px 3px 0 0;
  background: ${(props) => (props.$active ? BLUE : "transparent")};
  color: ${(props) => (props.$active ? "#fff" : "#1a1a1a")};
`;
const AccountBar = styled.div`
  display: flex;
  align-items: center;
  gap: 8px;
  margin-left: auto;
  padding-right: 6px;

  button {
    display: flex;
    align-items: center;
    gap: 3px;
  }
`;
const HelpMark = styled.span`
  width: 13px;
  height: 13px;
  border-radius: 2px;
  background: #888;
  color: #fff;
  font-weight: bold;
  line-height: 13px;
  text-align: center;
`;
const RibbonBar = styled.div`
  display: flex;
  gap: 12px;
  height: 73px;
  padding: 7px 7px 0;
  background: linear-gradient(#f4f4f4, #dedede);
  border-bottom: 1px solid #cccccc;
`;
const ToolGroup = styled.div`
  display: flex;
`;
const ToolButton = styled.button`
  display: flex;
  flex-direction: column;
  align-items: center;
  width: ${(props) => props.$width}px;
  height: 60px;

  span {
    margin-top: 2px;
    line-height: 16px;
  }
  span + svg {
    margin-top: 5px;
  }
`;
const LoadMeter = styled.div`
  position: absolute;
  top: 71px;
  right: 2px;
  display: flex;
  align-items: flex-end;
  width: 8px;
  height: 57px;
  padding: 1px;
  border-radius: 4px;
  background: #555;
  box-shadow: 0 0 3px #aaa;

  i {
    width: 100%;
    height: 27px;
    border-radius: 0 0 3px 3px;
    background: repeating-linear-gradient(#3fbf5f 0 1px, #444 1px 2px);
  }
`;
const Workspace = styled.div`
  display: flex;
  flex: 1;
  min-height: 0;
`;
const SidePanel = styled.aside`
  width: 240px;
  flex: none;
  border: solid #d4d4d4;
  border-width: 0 1px 1px;
`;
const Breadcrumb = styled.div`
  display: flex;
  align-items: center;
  justify-content: space-between;
  height: 27px;
  padding: 2px 8px 0;
  border-bottom: 1px solid #d4d4d4;
  background: #e8e8e8;
  font-family: ${latinFont};
`;
const SideTabs = styled.div`
  display: flex;
  height: 27px;
  border-bottom: 1px solid #d4d4d4;
`;
const SideTab = styled.button`
  width: 79px;
  border-right: 1px solid #c4c4c4;
  background: ${(props) => (props.$active ? "#cce8ff" : "#f4f4f4")};
  color: ${(props) => (props.$active ? BLUE : "#1a1a1a")};
`;
const SideTools = styled.div`
  display: flex;
  align-items: center;
  height: 33px;
  padding: 0 8px 0 19px;
  border-bottom: 1px solid #d4d4d4;
`;
const SideButton = styled.button`
  display: flex;
  align-items: center;
  margin-left: ${(props) => props.$left || 0}px;
`;
const PinButton = styled.button`
  margin-left: auto;
`;
const TreeRow = styled.div`
  display: flex;
  align-items: center;
  white-space: nowrap;
`;
const RootNode = styled(TreeRow)`
  gap: 6px;
  height: 35px;
  padding-left: 9px;
  font-weight: bold;
`;
const BranchNode = styled(TreeRow)`
  gap: 7px;
  height: 25px;
  padding-left: 37px;
`;
const LeafNode = styled(TreeRow)`
  height: 25px;
  padding-left: 74px;
  background: ${(props) => (props.$active ? "#cce8ff" : "transparent")};
`;
const MainPanel = styled.main`
  display: flex;
  flex: 1;
  flex-direction: column;
  min-width: 0;
`;
const ViewTabs = styled.div`
  display: flex;
  flex: none;
  height: 27px;
  border-bottom: 1px solid #d4d4d4;
`;
const ViewTab = styled.button`
  width: ${(props) => (props.$wide ? 92 : 80)}px;
  padding-top: 2px;
  border-right: 1px solid #c8c8c8;
  background: ${(props) => (props.$active ? "#cce8ff" : "transparent")};
  color: ${(props) => (props.$active ? BLUE : "#1a1a1a")};
`;
const ViewTools = styled.div`
  display: flex;
  align-items: center;
  gap: 8px;
  margin-left: auto;
  padding-right: 20px;
`;
const SettingsButton = styled.button`
  margin-left: 10px;
`;
const BillArea = styled.section`
  display: flex;
  flex: 3;
  min-height: 0;
  margin-left: 2px;
  border-bottom: 3px solid #bebebe;
  background: #fff;
`;
const BillScroll = styled.div`
  flex: 1;
  overflow: hidden;
`;
const ScrollTrack = styled.div`
  display: flex;
  flex-direction: column;
  align-items: center;
  width: 14px;
  padding: 4px 0;
  background: #e8e8e8;
`;
const ScrollThumb = styled.div`
  width: 10px;
  height: 82px;
  margin: 278px 0 auto;
  border-radius: 5px;
  background: #bdbdbd;
`;
const Grid = styled.table`
  width: ${(props) => props.$width}px;
  table-layout: fixed;
  border-spacing: 0;
  border-top: 1px solid #bebebe;
  font-family: "Noto Sans Mono CJK SC", "Noto Sans CJK SC", monospace;
  line-height: 14px;

  th:first-child, td:first-child {
    border-left: 1px solid #bebebe;
  }
`;
const GridRow = styled.tr`
  height: ${(props) => props.$height}px;
`;
const HeadCell = styled.th`
  height: 26px;
  padding: 0;
  border-right: 1px solid #bebebe;
  border-bottom: ${(props) => (props.$picked ? `2px solid ${BLUE}` : "1px solid #bebebe")};
  background: ${(props) => (props.$picked ? "#ffe6c8" : "#e8e8e8")};
  font-size: ${(props) => (props.$picked ? 13 : 12)}px;
  font-weight: ${(props) => (props.$picked ? "bold" : "normal")};
  white-space: nowrap;
`;
const Cell = styled.td`
  padding: 0 3px 0 2px;
  border-right: 1px solid #bebebe;
  border-bottom: 1px solid #bebebe;
  background-color: ${(props) => (props.$item ? "#edf4ff" : "#fff")};
  text-align: ${(props) => props.$align || "left"};
  white-space: pre;
`;
const NumberCell = styled(Cell)`
  padding: 0;
  border-right: ${(props) => (props.$sel ? `2px solid ${BLUE}` : "1px solid #bebebe")};
  background-color: ${(props) => (props.$sel ? "#ffe6c8" : "#fff")};
  font-size: ${(props) => (props.$bold ? 13 : 12)}px;
  font-weight: ${(props) => (props.$bold ? "bold" : "normal")};
  text-align: center;
`;
const line = "linear-gradient(#fcc57c, #fcc57c)";
const CodeCell = styled(Cell)`
  padding: 0;
  background-image: ${line}, ${line}, ${line};
  background-repeat: no-repeat;
  background-size: 1px 100%, 1px 50%, ${(props) => (props.$item ? 4 : 17)}px 1px;
  background-position: 8px 0, 18px ${(props) => (props.$item ? "100%" : "0")},
    ${(props) => (props.$item ? 8 : 18)}px 50%;
`;
const CodeLine = styled.div`
  display: flex;
  align-items: center;
  gap: 4px;
  padding-left: 12px;
`;
const ChildCode = styled.div`
  padding-left: 40px;
`;
const FoldButton = styled.button`
  width: 13px;
  height: 13px;
  border: 1px solid #777;
  background: linear-gradient(#333, #333) center / 7px 1px no-repeat #fff;
`;
const PickedCell = styled(Cell)`
  background-color: ${(props) => (props.$item ? "#f4f8fd" : "#fcfcfc")};
  ${(props) => props.$right && `border-right: 2px solid ${BLUE};`}
  ${(props) => props.$bottom && `border-bottom: 2px solid ${BLUE};`}
  ${(props) => props.$left && `border-left: 2px solid ${BLUE}; padding-left: 0;`}
  ${(props) => props.$top && `box-shadow: inset 0 2px ${BLUE};`}
`;
const UnitPicker = styled.div`
  display: flex;
  align-items: center;
  padding-right: 2px;

  select {
    flex: 1;
    min-width: 0;
    appearance: none;
  }
`;
const DetailArea = styled.section`
  display: flex;
  flex: 2;
  flex-direction: column;
  min-height: 0;
  margin-left: 2px;
`;
const DetailTabs = styled.div`
  display: flex;
  flex: none;
  gap: 2px;
  height: 31px;
  padding: 6px 8px 1px;
`;
const DetailTab = styled.button`
  display: flex;
  align-items: center;
  justify-content: center;
  gap: 6px;
  width: ${(props) => props.$width}px;
  background: ${(props) => (props.$active ? BLUE : "#bdbdbd")};
  color: ${(props) => (props.$active ? "#fff" : "#1a1a1a")};
  font-weight: ${(props) => (props.$active ? "bold" : "normal")};
`;
const NewBadge = styled.span`
  width: 17px;
  border-radius: 4px;
  background: #ff4a12;
  color: #fff;
  font-size: 7px;
  font-weight: bold;
  line-height: 9px;
`;
const DetailBody = styled.div`
  position: relative;
  flex: 1;
  background: #fff;
`;
const DetailCell = styled(Cell)`
  background-color: #ffffe8;
  ${(props) => props.$focus && "border-right: 2px solid #808080; border-bottom: 2px solid #808080; box-shadow: inset 0 1px #808080;"}
`;
const Tick = styled.input`
  display: block;
  width: 14px;
  height: 14px;
  margin: 0 auto;
  appearance: none;
  border: 1px solid #d4d4d4;
  border-radius: 2px;
  background: #f4f4f4;
`;
const Watermark = styled.div`
  position: absolute;
  right: 88px;
  bottom: 17px;
  display: flex;
  flex-direction: column;
  width: 202px;
  color: #b8b8b8;
  font-family: ${latinFont};
  white-space: nowrap;

  strong {
    font-size: 21px;
    font-weight: 300;
    line-height: 28px;
  }
  span {
    font-size: 15px;
    line-height: 20px;
  }
`;
const Status = styled.footer`
  display: flex;
  align-items: center;
  height: 32px;
  flex: none;
  border-top: 1px solid #d0d0d0;
`;
const StatusItem = styled.span`
  padding: 1px 26px 1px 17px;
  border-right: 1px solid #a8b4bc;
  white-space: nowrap;

  &:first-child {
    padding-left: 10px;
  }
`;
const ScoreButton = styled.button`
  width: 80px;
  height: 22px;
  margin-left: 24px;
  border-radius: 3px;
  background: ${BLUE};
  color: #fff;
`;
const ZoomBar = styled.div`
  display: flex;
  align-items: center;
  margin-left: auto;
  padding-right: 6px;
`;
const LayoutButton = styled.button`
  display: flex;
  align-items: center;
  justify-content: center;
  width: 22px;
  height: 22px;
  margin-right: ${(props) => (props.$active ? 5 : 15)}px;
  border: 1px solid ${(props) => (props.$active ? "#d0d0d0" : "transparent")};
  border-radius: 3px;
  background: ${(props) => (props.$active ? "#fff" : "transparent")};
`;
const ZoomLabel = styled.label`
  width: 42px;
`;
const StepButton = styled.button`
  width: 12px;
`;
const ZoomSlider = styled.input`
  width: 106px;
  height: 14px;
  margin: 0 11px;
  appearance: none;
  background: linear-gradient(#c8c8c8, #c8c8c8) center / 100% 2px no-repeat;

  &::-webkit-slider-thumb {
    width: 12px;
    height: 12px;
    appearance: none;
    border: 1px solid #555;
    border-radius: 50%;
    background: #fff;
  }
`;
const Task = styled.footer`
  display: flex;
  flex: none;
  height: 40px;
  padding-top: 1px;
  background: linear-gradient(90deg, #2a2521, #2c2521 60%, #3c2e22 80%, #2e2620);
  color: #fff;
  font-family: ${latinFont};
`;
const Launch = styled.button`
  display: flex;
  flex: none;
  align-items: center;
  justify-content: center;
  gap: 6px;
  width: ${(props) => props.$width}px;
`;
const WindowButton = styled.button`
  display: flex;
  flex: none;
  align-items: center;
  gap: 6px;
  width: 123px;
  height: 38px;
  margin: 0 ${(props) => (props.$first ? 2 : 1)}px;
  padding-left: 8px;
  border: 1px solid ${(props) => (props.$active ? "#f0ece8" : "#8a8078")};
  background: ${(props) => (props.$active ? "linear-gradient(#6e6862, #928b85)" : "#5b524a")};
  color: #fff;
`;
const Tray = styled.div`
  display: flex;
  align-items: center;
  margin-left: auto;
  padding-right: 10px;
`;
const TrayButton = styled.button`
  display: flex;
  justify-content: center;
  width: ${(props) => (props.$wide ? 32 : 24)}px;
`;
const Clock = styled.div`
  display: flex;
  flex-direction: column;
  width: 76px;
  line-height: 19px;
  text-align: center;
`;
